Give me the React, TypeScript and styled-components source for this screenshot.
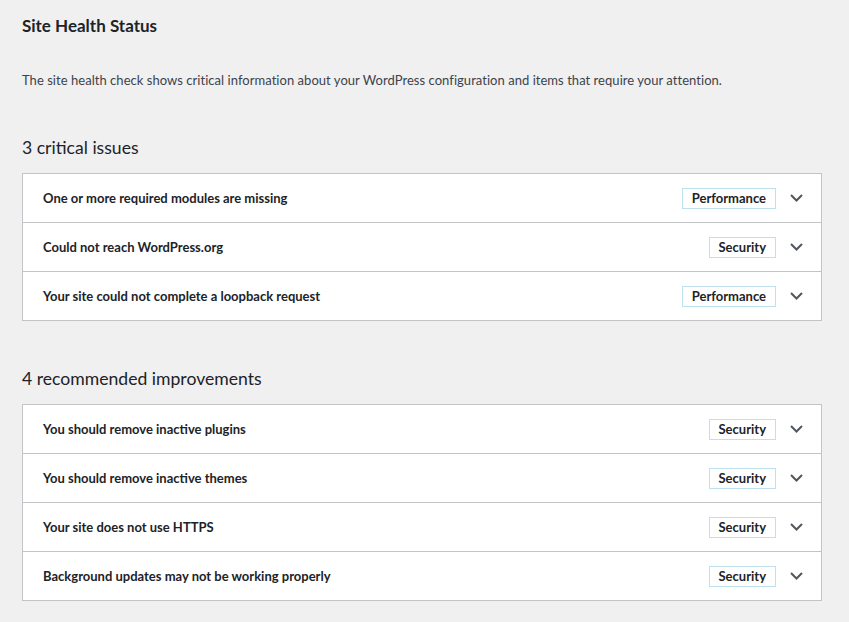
import React from "react";
import styled, { createGlobalStyle } from "styled-components";

const Global = createGlobalStyle`
  html, body { margin: 0; padding: 0; background: #f0f0f1; }
  body { font-family: Lato, "Noto Sans", sans-serif; color: #1d2327; }
`;

const Page = styled.div`
  padding: 14px 22px 20px 22px;
  width: 800px;
`;

const Title = styled.h1`
  margin: 0;
  font-size: 17px;
  line-height: 24px;
  font-weight: 700;
  color: #1d2327;
`;

const Description = styled.p`
  margin: 32px 0 0 0;
  font-size: 13px;
  line-height: 20px;
  letter-spacing: 0.04px;
  color: #3c434a;
`;

const SectionTitle = styled.h2`
  margin: 46px 0 13px 0;
  font-size: 17.6px;
  line-height: 24px;
  font-weight: 400;
  color: #1d2327;
`;

const Accordion = styled.div`
  background: #fff;
  border: 1px solid #c3c4c7;
`;

const Row = styled.div`
  display: flex;
  align-items: center;
  height: 48px;
  padding: 0 18px 0 20px;
  border-top: 1px solid #c3c4c7;
  &:first-child { border-top: none; }
`;

const RowTitle = styled.span`
  flex: 1;
  font-size: 13px;
  font-weight: 700;
  color: #1d2327;
`;

const Badge = styled.span`
  display: inline-flex;
  align-items: center;
  height: 19px;
  padding: 0 9px;
  border: 1px solid #bfe0ee;
  font-size: 13px;
  font-weight: 700;
  color: #1d2327;
  margin-right: 14px;
`;

const Chevron = styled.svg`
  width: 13px;
  height: 8px;
  display: block;
`;

type Item = { title: string; badge: string };

const critical: Item[] = [
  { title: "One or more required modules are missing", badge: "Performance" },
  { title: "Could not reach WordPress.org", badge: "Security" },
  { title: "Your site could not complete a loopback request", badge: "Performance" },
];

const recommended: Item[] = [
  { title: "You should remove inactive plugins", badge: "Security" },
  { title: "You should remove inactive themes", badge: "Security" },
  { title: "Your site does not use HTTPS", badge: "Security" },
  { title: "Background updates may not be working properly", badge: "Security" },
];

function Section({ heading, items }: { heading: string; items: Item[] }) {
  return (
    <>
      <SectionTitle>{heading}</SectionTitle>
      <Accordion>
        {items.map((it) => (
          <Row key={it.title}>
            <RowTitle>{it.title}</RowTitle>
            <Badge>{it.badge}</Badge>
            <Chevron viewBox="0 0 13 8">
              <polyline points="1,1 6.5,6.5 12,1" fill="none" stroke="#50575e" strokeWidth="2" />
            </Chevron>
          </Row>
        ))}
      </Accordion>
    </>
  );
}

export default function App() {
  return (
    <Page>
      <Global />
      <Title>Site Health Status</Title>
      <Description>
        The site health check shows critical information about your WordPress configuration and items that require your attention.
      </Description>
      <Section heading="3 critical issues" items={critical} />
      <Section heading="4 recommended improvements" items={recommended} />
    </Page>
  );
}
